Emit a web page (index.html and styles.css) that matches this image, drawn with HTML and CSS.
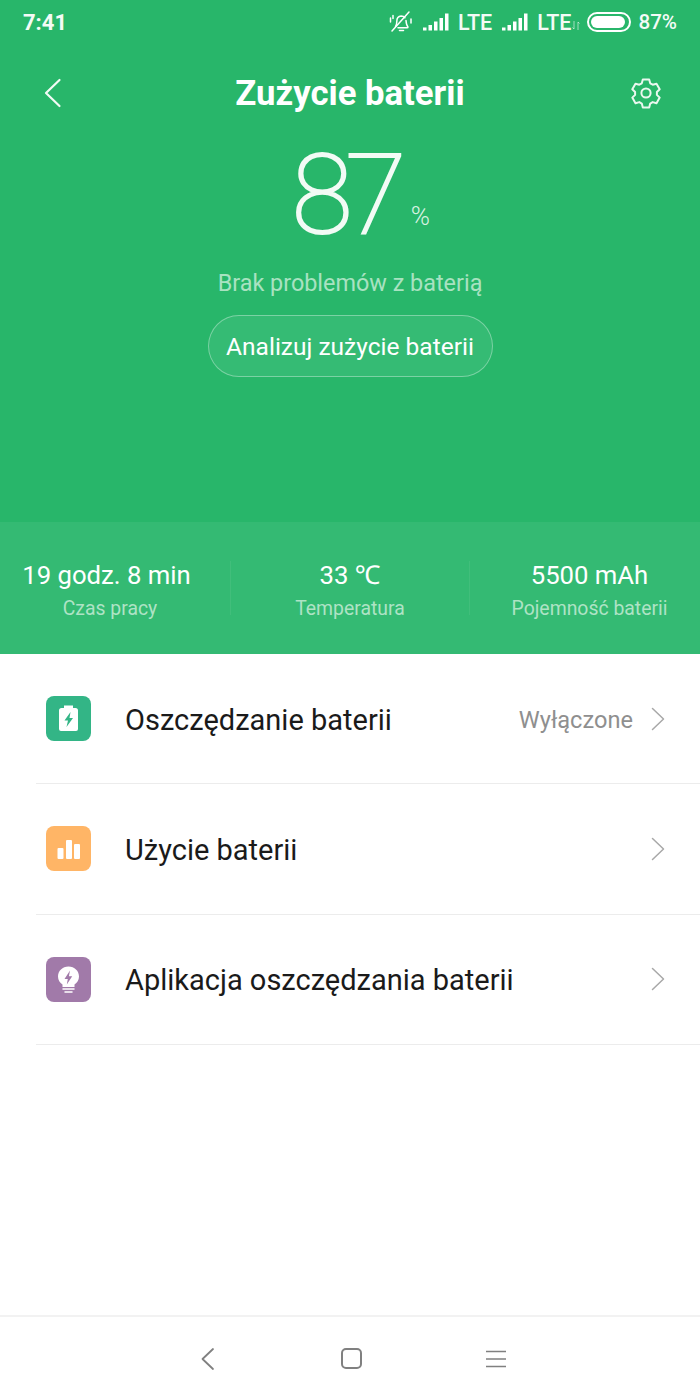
FILE: index.html
```html
<!DOCTYPE html>
<html lang="pl">
<head>
    <meta charset="UTF-8">
    <meta name="viewport" content="width=device-width, initial-scale=1.0">
    <title>Zużycie baterii</title>
    <link rel="stylesheet" href="styles.css">
</head>
<body>
    <div class="phone">
        <div class="hero">
            <div class="status-bar">
                <span class="clock">7:41</span>
                <div class="status-icons">
                    <svg class="bell" width="24" height="24" viewBox="0 0 24 24" fill="none" stroke="#fff" stroke-width="1.5" stroke-linecap="round" stroke-linejoin="round">
                        <path d="M6.5 16.5c1-1.2 1.3-2.5 1.3-5 0-3 1.8-5.2 4.4-5.4 1.5 0 2.9.6 3.7 1.7M17 10.5c.2 3 .5 5 2 6.5 0 .6-.3.8-1 .8H9"/>
                        <path d="M10.5 20.5h4M3 21 20 2M1.500 8v4M4 5.500v3M22 9v4"/>
                    </svg>
                    <svg width="26" height="18" viewBox="0 0 26 18" fill="#fff">
                        <rect x="0" y="14.500" width="3.500" height="3"/><rect x="5.500" y="12" width="3.500" height="5.500"/><rect x="11" y="8.500" width="3.500" height="9"/><rect x="16.500" y="5" width="3.500" height="12.500"/><rect x="22" y="0.500" width="3.500" height="17"/>
                    </svg>
                    <span class="net">LTE</span>
                    <svg class="signal-2" width="26" height="18" viewBox="0 0 26 18" fill="#fff">
                        <rect x="0" y="14.500" width="3.500" height="3"/><rect x="5.500" y="12" width="3.500" height="5.500"/><rect x="11" y="8.500" width="3.500" height="9"/><rect x="16.500" y="5" width="3.500" height="12.500"/><rect x="22" y="0.500" width="3.500" height="17"/>
                    </svg>
                    <span class="net">LTE</span>
                    <svg class="arrows" width="8" height="9" viewBox="0 0 8 9" fill="none" stroke="#fff" stroke-opacity=".55" stroke-width="1">
                        <path d="M2 0v8M.5 6.500 2 8M6 9V1M6 1 7.500 2.500"/>
                    </svg>
                    <div class="battery"><div class="battery-fill"></div></div>
                    <span class="battery-pct">87%</span>
                </div>
            </div>

            <div class="title-bar">
                <svg width="20" height="32" viewBox="0 0 20 32" fill="none" stroke="#f2fbf5" stroke-width="2.200" stroke-linecap="round" stroke-linejoin="round">
                    <path d="M16.500 3 3 16l13.500 13"/>
                </svg>
                <h1>Zużycie baterii</h1>
                <svg width="34" height="34" viewBox="0 0 34 34" fill="none" stroke="#eaf8ef" stroke-width="2" stroke-linejoin="round">
                    <path d="M13.800 3.500h6.400l1 3.800 2.500 1.400 3.800-1 3.200 5.500-2.800 2.800v2.900l2.800 2.700-3.200 5.600-3.800-1.100-2.500 1.500-1 3.800h-6.400l-1-3.800-2.500-1.500-3.800 1.100-3.200-5.600 2.800-2.700v-2.900l-2.800-2.800 3.200-5.500 3.800 1 2.500-1.400z"/>
                    <circle cx="17" cy="17" r="4.600"/>
                </svg>
            </div>

            <div class="level">
                <span class="level-num">87</span>
                <span class="level-unit">%</span>
            </div>
            <p class="level-note">Brak problemów z baterią</p>
            <button class="analyze-btn">Analizuj zużycie baterii</button>
        </div>

        <div class="stats">
            <div class="stat stat-first">
                <div class="stat-value">19 godz. 8 min</div>
                <div class="stat-label">Czas pracy</div>
            </div>
            <div class="stat stat-mid">
                <div class="stat-value">33 ℃</div>
                <div class="stat-label">Temperatura</div>
            </div>
            <div class="stat stat-last">
                <div class="stat-value">5500 mAh</div>
                <div class="stat-label">Pojemność baterii</div>
            </div>
        </div>

        <div class="list">
            <div class="row">
                <svg class="row-icon" width="45" height="45" viewBox="0 0 45 45">
                    <rect width="45" height="45" rx="8" fill="#33b586"/>
                    <path d="M15.500 12h2.500V9.500h9V12h2.500a2.500 2.500 0 0 1 2.500 2.500V33a2 2 0 0 1-2 2H15a2 2 0 0 1-2-2V14.500a2.500 2.500 0 0 1 2.500-2.500z" fill="#fff"/>
                    <path d="M24.500 16 18.500 24.500H22L20.500 31 27 22H23.500z" fill="#33b586"/>
                </svg>
                <span class="row-title">Oszczędzanie baterii</span>
                <span class="row-value">Wyłączone</span>
                <svg class="chevron" width="14" height="24" viewBox="0 0 14 24" fill="none" stroke="#a8a8a8" stroke-width="1.500" stroke-linecap="round" stroke-linejoin="round">
                    <path d="M1.500 1.500 12.500 12 1.500 22.500"/>
                </svg>
            </div>
            <div class="row">
                <svg class="row-icon" width="45" height="45" viewBox="0 0 45 45">
                    <rect width="45" height="45" rx="8" fill="#ffb566"/>
                    <rect x="11.500" y="22" width="6" height="11" rx="1" fill="#fff"/>
                    <rect x="20" y="14" width="6" height="19" rx="1" fill="#fff"/>
                    <rect x="28" y="18" width="6" height="15" rx="1" fill="#fff"/>
                </svg>
                <span class="row-title">Użycie baterii</span>
                <svg class="chevron" width="14" height="24" viewBox="0 0 14 24" fill="none" stroke="#a8a8a8" stroke-width="1.500" stroke-linecap="round" stroke-linejoin="round">
                    <path d="M1.500 1.500 12.500 12 1.500 22.500"/>
                </svg>
            </div>
            <div class="row">
                <svg class="row-icon" width="45" height="45" viewBox="0 0 45 45">
                    <rect width="45" height="45" rx="8" fill="#a17aa9"/>
                    <path d="M22.500 9.500c6 0 10.500 4.400 10.500 10 0 3.600-1.900 6.200-4.500 8v2.500h-12v-2.500c-2.600-1.800-4.500-4.400-4.500-8 0-5.600 4.500-10 10.500-10z" fill="#fff"/>
                    <path d="M17 32h11M19 35h7" stroke="#fff" stroke-width="1.500" stroke-linecap="round"/>
                    <path d="M24 13.500 18.500 22h3.300l-1 5.500 5.400-8.300h-3.300z" fill="#a17aa9"/>
                </svg>
                <span class="row-title">Aplikacja oszczędzania baterii</span>
                <svg class="chevron" width="14" height="24" viewBox="0 0 14 24" fill="none" stroke="#a8a8a8" stroke-width="1.500" stroke-linecap="round" stroke-linejoin="round">
                    <path d="M1.500 1.500 12.500 12 1.500 22.500"/>
                </svg>
            </div>
        </div>

        <div class="nav-bar">
            <svg width="16" height="24" viewBox="0 0 16 24" fill="none" stroke="#808080" stroke-width="1.800" stroke-linecap="round" stroke-linejoin="round">
                <path d="M13 2 2.500 12 13 22"/>
            </svg>
            <svg width="21" height="21" viewBox="0 0 21 21" fill="none" stroke="#808080" stroke-width="2">
                <rect x="1" y="1" width="19" height="19" rx="4"/>
            </svg>
            <svg width="20" height="18" viewBox="0 0 20 18" fill="none" stroke="#808080" stroke-width="1.600">
                <path d="M0 1.500h20M0 9h20M0 16.500h20"/>
            </svg>
        </div>
    </div>
</body>
</html>
```

FILE: styles.css
```css
* {
    box-sizing: border-box;
}
body {
    margin: 0;
    font-family: 'Roboto', 'Noto Sans', sans-serif;
    background: white;
}
.phone {
    width: 700px;
    height: 1400px;
    display: flex;
    flex-direction: column;
}
.hero {
    height: 522px;
    background: #28b66a;
    color: white;
    display: flex;
    flex-direction: column;
    align-items: center;
}
.status-bar {
    width: 100%;
    height: 44px;
    padding: 0 23px;
    display: flex;
    justify-content: space-between;
    align-items: center;
    color: #f4fbf6;
}
.clock {
    font-size: 22px;
    font-weight: 700;
}
.status-icons {
    display: flex;
    align-items: center;
}
.bell {
    margin-right: 10px;
}
.net {
    font-size: 21.5px;
    font-weight: 500;
    margin-left: 9px;
}
.signal-2 {
    margin-left: 10px;
}
.arrows {
    margin: 6px 7px 0 1px;
}
.battery {
    width: 44px;
    height: 20px;
    border: 2px solid white;
    border-radius: 10px;
    padding: 2px;
}
.battery-fill {
    width: 34px;
    height: 12px;
    background: white;
    border-radius: 6px;
}
.battery-pct {
    font-size: 20.6px;
    font-weight: 500;
    margin-left: 7px;
}
.title-bar {
    width: 100%;
    height: 54px;
    margin-top: 22px;
    display: flex;
    justify-content: space-between;
    align-items: center;
    padding: 0 37px 0 43px;
}
.title-bar h1 {
    margin: 0 0 0 8px;
    font-size: 34.7px;
    font-weight: 700;
}
.level {
    position: relative;
    height: 112px;
    margin-top: 19px;
    margin-right: 9px;
    display: flex;
    justify-content: center;
    line-height: 112px;
}
.level-num {
    font-size: 111px;
    font-weight: 100;
    color: #f2fbf5;
    letter-spacing: -7px;
    -webkit-text-stroke: 2.2px #f2fbf5;
}
.level-unit {
    position: absolute;
    left: 100%;
    top: 62px;
    margin-left: 11.5px;
    font-size: 26px;
    line-height: 30px;
    font-weight: 300;
    color: #d8f2e2;
}
.level-note {
    margin: 17px 0 0;
    font-size: 23.4px;
    line-height: 30px;
    color: #a9e2c1;
}
.analyze-btn {
    margin-top: 17px;
    width: 285px;
    height: 62px;
    border: 1px solid rgba(255, 255, 255, 0.35);
    border-radius: 31px;
    background: #35bb74;
    color: white;
    font-family: inherit;
    font-size: 24.5px;
}
.stats {
    height: 132px;
    background: #34ba73;
    display: flex;
    align-items: center;
    color: white;
}
.stat {
    width: 230px;
    height: 54px;
    display: flex;
    flex-direction: column;
    align-items: center;
}
.stat-first {
    padding-right: 10px;
}
.stat-first .stat-value {
    margin-right: 7px;
}
.stat-last {
    padding-left: 9px;
}
.stat-mid {
    width: 240px;
    border-left: 1px solid #41be7b;
    border-right: 1px solid #41be7b;
}
.stat-value {
    font-size: 25.7px;
    line-height: 28px;
}
.stat-label {
    margin-top: 9px;
    font-size: 19.4px;
    line-height: 22px;
    color: #aee3c5;
}
.list {
    flex: 1;
    padding-left: 36px;
}
.row {
    height: 130.33px;
    border-bottom: 1px solid #ececec;
    display: flex;
    align-items: center;
    padding-left: 10px;
    padding-right: 35px;
}
.row-icon {
    margin-right: 34px;
    flex-shrink: 0;
}
.row-title {
    flex: 1;
    font-size: 29px;
    color: #1a1a1a;
    margin-top: 2px;
}
.row-value {
    font-size: 23.6px;
    color: #8f8f8f;
    margin-right: 18px;
    margin-top: 2px;
}
.nav-bar {
    height: 85px;
    border-top: 2px solid #f2f2f2;
    padding: 0 194px 0 200px;
    display: flex;
    justify-content: space-between;
    align-items: center;
}
```
